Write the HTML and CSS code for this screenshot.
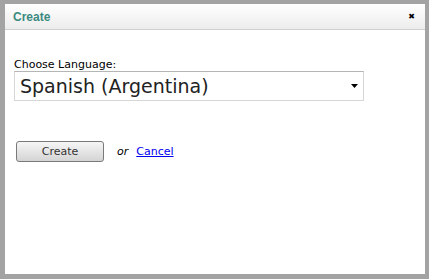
FILE: index.html
```html
<!DOCTYPE html>
<html lang="en">
<head>
    <meta charset="UTF-8">
    <title>Create</title>
    <link rel="stylesheet" href="styles.css">
</head>
<body>
    <div class="dialog">
        <div class="dialog-header">
            <span class="dialog-title">Create</span>
            <span class="dialog-close">&#x2716;</span>
        </div>
        <div class="dialog-body">
            <label class="field-label">Choose Language:</label>
            <div class="select">
                <span class="select-value">Spanish (Argentina)</span>
                <svg class="select-arrow" width="7" height="4" viewBox="0 0 7 4"><path d="M0 0H7L3.5 4Z" fill="#000"/></svg>
            </div>
            <div class="actions">
                <button class="btn">Create</button>
                <span class="or">or</span>
                <a href="#" class="cancel">Cancel</a>
            </div>
        </div>
    </div>
</body>
</html>
```

FILE: styles.css
```css
body {
    margin: 0;
    padding: 4px 4px 0 5px;
    background: #a3a3a3;
    font-family: 'DejaVu Sans', Verdana, sans-serif;
}
.dialog {
    width: 420px;
    height: 270px;
    background: white;
}
.dialog-header {
    height: 25px;
    display: flex;
    align-items: center;
    justify-content: space-between;
    padding: 0 10px 0 8px;
    background: linear-gradient(#ffffff, #ececec);
    border-bottom: 1px solid #cfcfcf;
}
.dialog-title {
    font-family: 'Liberation Sans', Arial, sans-serif;
    font-weight: bold;
    font-size: 12px;
    color: #3b8a80;
}
.dialog-close {
    font-size: 8px;
    color: #000;
}
.dialog-body {
    padding: 28px 0 0 9px;
}
.field-label {
    display: block;
    font-size: 11px;
    line-height: 13px;
    color: #000;
}
.select {
    width: 350px;
    height: 30px;
    box-sizing: border-box;
    border: 1px solid #d6d6d6;
    border-top-color: #b5b5b5;
    display: flex;
    align-items: center;
    justify-content: space-between;
    padding: 0 5px;
}
.select-value {
    font-size: 19px;
    color: #222;
}
.select-arrow {
    display: block;
}
.actions {
    margin-top: 40px;
    display: flex;
    align-items: center;
}
.btn {
    width: 88px;
    height: 21px;
    margin-left: 2px;
    border: 1px solid #7a7a7a;
    border-radius: 3px;
    background: linear-gradient(#f6f6f6, #d4d4d4);
    font-family: 'DejaVu Sans', Verdana, sans-serif;
    font-size: 11px;
    color: #333;
    padding: 0;
}
.or {
    margin-left: 13px;
    font-size: 11px;
    font-style: italic;
    color: #000;
}
.cancel {
    margin-left: 8px;
    font-size: 11px;
    color: #0000ee;
}
```
